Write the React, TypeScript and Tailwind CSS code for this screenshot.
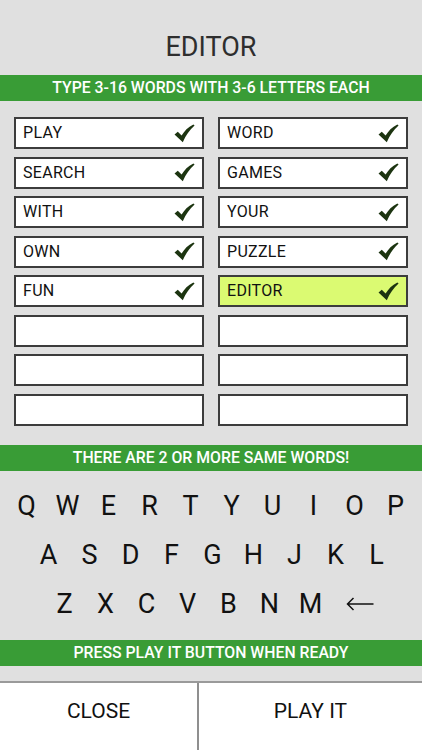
import React from "react";

const words: { text: string; ok: boolean; highlight?: boolean }[] = [
  { text: "PLAY", ok: true },
  { text: "WORD", ok: true },
  { text: "SEARCH", ok: true },
  { text: "GAMES", ok: true },
  { text: "WITH", ok: true },
  { text: "YOUR", ok: true },
  { text: "OWN", ok: true },
  { text: "PUZZLE", ok: true },
  { text: "FUN", ok: true },
  { text: "EDITOR", ok: true, highlight: true },
  { text: "", ok: false },
  { text: "", ok: false },
  { text: "", ok: false },
  { text: "", ok: false },
  { text: "", ok: false },
  { text: "", ok: false },
];

// each keyboard row has its own left offset, like the game's layout
const rows = [
  { keys: ["Q", "W", "E", "R", "T", "Y", "U", "I", "O", "P"], cls: "pl-[6px]" },
  { keys: ["A", "S", "D", "F", "G", "H", "J", "K", "L"], cls: "pl-[28px]" },
  { keys: ["Z", "X", "C", "V", "B", "N", "M"], cls: "pl-[44px]" },
];

const Check = () => (
  <svg width="21" height="19" viewBox="0 0 21 19" className="shrink-0">
    <path
      d="M0.5 10.5 L3.8 7.8 L7.6 11.6 C10.2 7 14 3 19.4 0.4 L20.6 1.6 C15.6 6 11.8 11.6 8.8 18.2 Z"
      fill="#1c3410"
    />
  </svg>
);

const Bar = ({ children }: { children: React.ReactNode }) => (
  <div className="h-[26px] bg-[#399c36] flex items-center justify-center text-white text-[15.8px] font-medium">
    {children}
  </div>
);

export default function App() {
  return (
    <div
      className="w-[422px] h-[750px] bg-[#e0e0e0] flex flex-col overflow-hidden"
      style={{ fontFamily: "Roboto, 'Liberation Sans', sans-serif" }}
    >
      {/* title */}
      <div className="h-[75px] flex items-center justify-center pt-[20px] text-[27px] text-[#2e2e2e]">
        EDITOR
      </div>

      <Bar>TYPE 3-16 WORDS WITH 3-6 LETTERS EACH</Bar>

      {/* word inputs */}
      <div className="grid grid-cols-2 gap-x-[14px] gap-y-[7.5px] px-[14px] pt-[16px]">
        {words.map((w, i) => (
          <div
            key={i}
            className={`h-[32px] border-2 border-[#3c3c3c] flex items-center justify-between pl-[7px] pr-[7px] text-[16px] text-[#111] ${
              w.highlight ? "bg-[#dbfa72]" : "bg-white"
            }`}
          >
            <span className="tracking-[0.3px]">{w.text}</span>
            {w.ok && <Check />}
          </div>
        ))}
      </div>

      <div className="mt-[19px]">
        <Bar>THERE ARE 2 OR MORE SAME WORDS!</Bar>
      </div>

      {/* keyboard */}
      <div className="flex flex-col pt-[21px] gap-[21px] text-[27px] text-[#111] leading-[28px]">
        {rows.map((row, r) => (
          <div key={r} className={`flex ${row.cls}`}>
            {row.keys.map((k) => (
              <div key={k} className="w-[41px] text-center">
                {k}
              </div>
            ))}
            {r === 2 && (
              <div className="w-[57px] flex items-center justify-center">
                <svg width="28" height="14" viewBox="0 0 28 14">
                  <path
                    d="M27.5 7 H1.5 M7.5 1 L1.5 7 L7.5 13"
                    stroke="#111"
                    strokeWidth="1.5"
                    fill="none"
                  />
                </svg>
              </div>
            )}
          </div>
        ))}
      </div>

      <div className="mt-[22px]">
        <Bar>PRESS PLAY IT BUTTON WHEN READY</Bar>
      </div>

      {/* bottom buttons */}
      <div className="mt-[15px] flex-1 flex border-t-2 border-[#9a9a9a] bg-white text-[21px] text-[#111]">
        <div className="w-[199px] flex items-center justify-center pb-[10px] border-r-2 border-[#8f8f8f]">
          CLOSE
        </div>
        <div className="flex-1 flex items-center justify-center pb-[10px]">PLAY IT</div>
      </div>
    </div>
  );
}
